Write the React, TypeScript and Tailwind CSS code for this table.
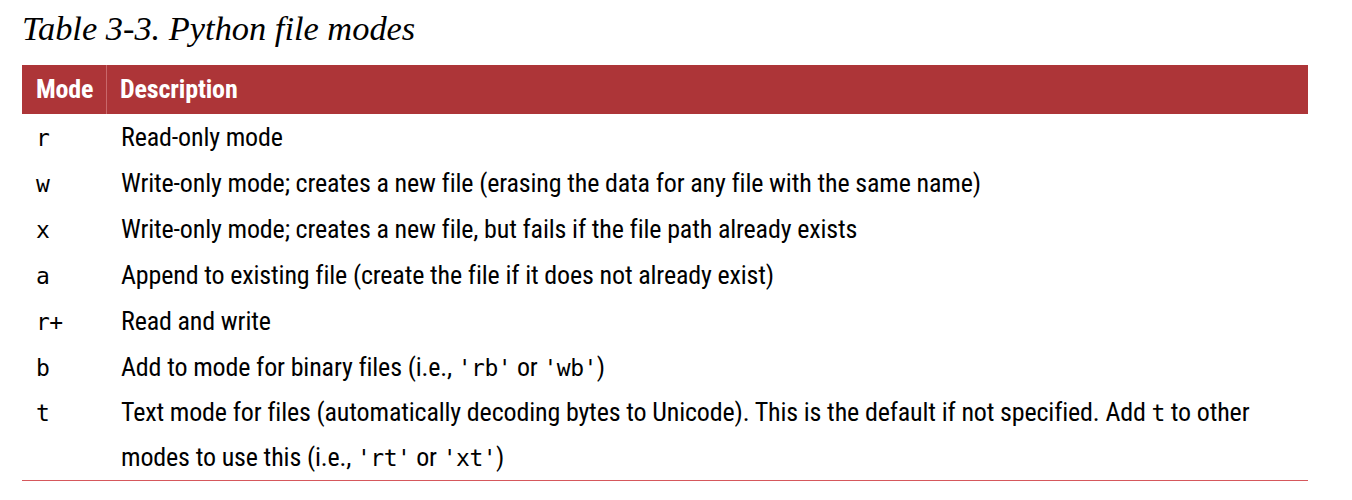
import React from "react";

type Row = { mode: string; desc: React.ReactNode };

const Code = ({ children }: { children: React.ReactNode }) => (
  <span className="font-['DejaVu_Sans_Mono',monospace] text-[23px] leading-none tracking-[-0.5px]">{children}</span>
);

const rows: Row[] = [
  { mode: "r", desc: "Read-only mode" },
  { mode: "w", desc: "Write-only mode; creates a new file (erasing the data for any file with the same name)" },
  { mode: "x", desc: "Write-only mode; creates a new file, but fails if the file path already exists" },
  { mode: "a", desc: "Append to existing file (create the file if it does not already exist)" },
  { mode: "r+", desc: "Read and write" },
  {
    mode: "b",
    desc: (
      <>
        Add to mode for binary files (i.e., <Code>'rb'</Code> or <Code>'wb'</Code>)
      </>
    ),
  },
  {
    mode: "t",
    desc: (
      <>
        Text mode for files (automatically decoding bytes to Unicode). This is the default if not specified. Add{" "}
        <Code>t</Code> to other
        <br />
        modes to use this (i.e., <Code>'rt'</Code> or <Code>'xt'</Code>)
      </>
    ),
  },
];

export default function App() {
  return (
    <div className="w-[1352px] h-[500px] bg-white text-black">
      {/* caption */}
      <div className="pl-[22px] pt-[8px] mb-[17px] font-['Liberation_Serif',serif] italic text-[34.4px] leading-[40px]">
        Table 3-3. Python file modes
      </div>

      {/* table */}
      <div className="ml-[22px] w-[1286px] font-['Roboto_Condensed',sans-serif] text-[26px] tracking-[-0.15px] border-b border-[#d6585c]">
        <div className="grid grid-cols-[85px_1fr] h-[49px] bg-[#ad3538] text-white font-bold">
          <div className="flex items-center pl-[14px] border-r border-[#c9686b]">Mode</div>
          <div className="flex items-center pl-[13px]">Description</div>
        </div>
        {rows.map((row, i) => (
          <div
            key={row.mode}
            className={i === rows.length - 1 ? "grid grid-cols-[85px_1fr] leading-[45px]" : "grid grid-cols-[85px_1fr] leading-[46px]"}
          >
            <div className="pl-[14px]">
              <Code>{row.mode}</Code>
            </div>
            <div className="pl-[14px] pr-[40px]">{row.desc}</div>
          </div>
        ))}
      </div>
    </div>
  );
}
